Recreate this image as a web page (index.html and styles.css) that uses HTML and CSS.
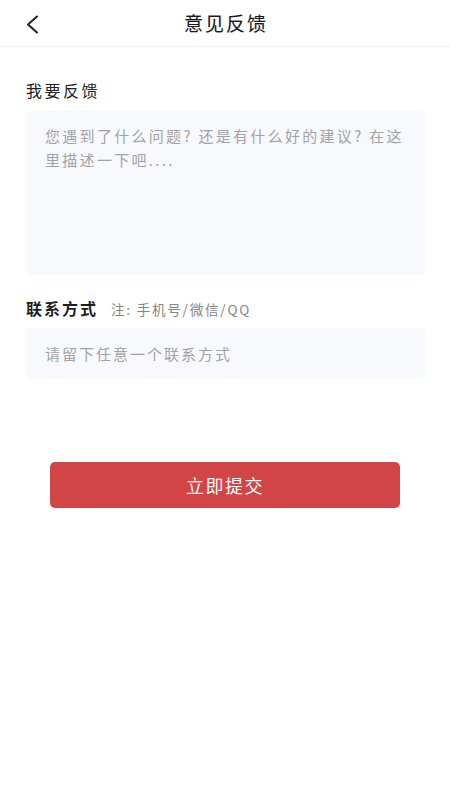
FILE: index.html
```
<!DOCTYPE html>
<html lang="zh-CN">
<head>
<meta charset="utf-8">
<meta name="viewport" content="width=device-width, initial-scale=1">
<title>意见反馈</title>
<link rel="stylesheet" href="styles.css">
</head>
<body>
<header class="topbar">
  <button class="back" aria-label="返回">
    <svg width="14" height="19" viewBox="0 0 14 19"><path d="M12 1.5 L3 9.5 L12 17.5" fill="none" stroke="#222" stroke-width="2" stroke-linecap="round" stroke-linejoin="round"/></svg>
  </button>
  <h1 class="title">意见反馈</h1>
</header>
<main class="content">
  <div class="label-row">
    <span class="label">我要反馈</span>
  </div>
  <textarea class="feedback" placeholder="您遇到了什么问题? 还是有什么好的建议? 在这里描述一下吧...."></textarea>
  <div class="label-row contact-row">
    <span class="label strong">联系方式</span>
    <span class="note">注: 手机号/微信/QQ</span>
  </div>
  <input class="contact" type="text" placeholder="请留下任意一个联系方式">
  <div class="actions">
    <button class="submit">立即提交</button>
  </div>
</main>
</body>
</html>
```
FILE: styles.css
```
* { box-sizing: border-box; }
html, body {
  margin: 0;
  padding: 0;
  background: #fff;
  font-family: "Noto Sans CJK SC", "Noto Sans", sans-serif;
  color: #222;
}
.topbar {
  position: relative;
  height: 47px;
  border-bottom: 1px solid #f0f0f0;
  display: flex;
  align-items: center;
  justify-content: center;
}
.back {
  position: absolute;
  left: 25px;
  top: 14px;
  width: 18px;
  height: 20px;
  padding: 0;
  border: none;
  background: none;
  display: flex;
  align-items: center;
  justify-content: flex-start;
}
.title {
  margin: 0;
  font-size: 19px;
  font-weight: 400;
  letter-spacing: 2px;
  line-height: 26px;
  color: #1a1a1a;
  -webkit-text-stroke: 0.12px #1a1a1a;
  padding-left: 2px;
}
.content {
  padding: 32px 25px 0 26px;
  display: flex;
  flex-direction: column;
}
.label-row {
  display: flex;
  align-items: baseline;
  gap: 13px;
  height: 22px;
  line-height: 22px;
}
.label {
  font-size: 16px;
  letter-spacing: 2.5px;
  color: #222;
  font-weight: 400;
}
.label.strong { font-weight: 700; color: #1e1e1e; letter-spacing: 2px; }
.note {
  font-size: 13.5px;
  letter-spacing: 1.8px;
  color: #858585;
}
.feedback, .contact {
  width: 100%;
  border: none;
  outline: none;
  background: #f8f9fc;
  border-radius: 5px;
  font-family: inherit;
  font-size: 15px;
  letter-spacing: 2.3px;
  color: #333;
  padding-left: 19px;
  padding-right: 16px;
}
.feedback {
  margin-top: 10px;
  height: 164px;
  resize: none;
  padding-top: 13px;
  line-height: 24px;
}
.contact {
  margin-top: 9px;
  height: 50px;
  letter-spacing: 2px;
}
.feedback::placeholder, .contact::placeholder { color: #a3a3a6; }
.contact-row { margin-top: 22px; }
.actions {
  margin-top: 84px;
  display: flex;
  justify-content: center;
}
.submit {
  width: 350px;
  height: 46px;
  border: none;
  border-radius: 5px;
  background: #d24546;
  color: #fff;
  font-family: inherit;
  font-size: 18px;
  letter-spacing: 1.5px;
  font-weight: 400;
  margin-left: -1px;
}
```
